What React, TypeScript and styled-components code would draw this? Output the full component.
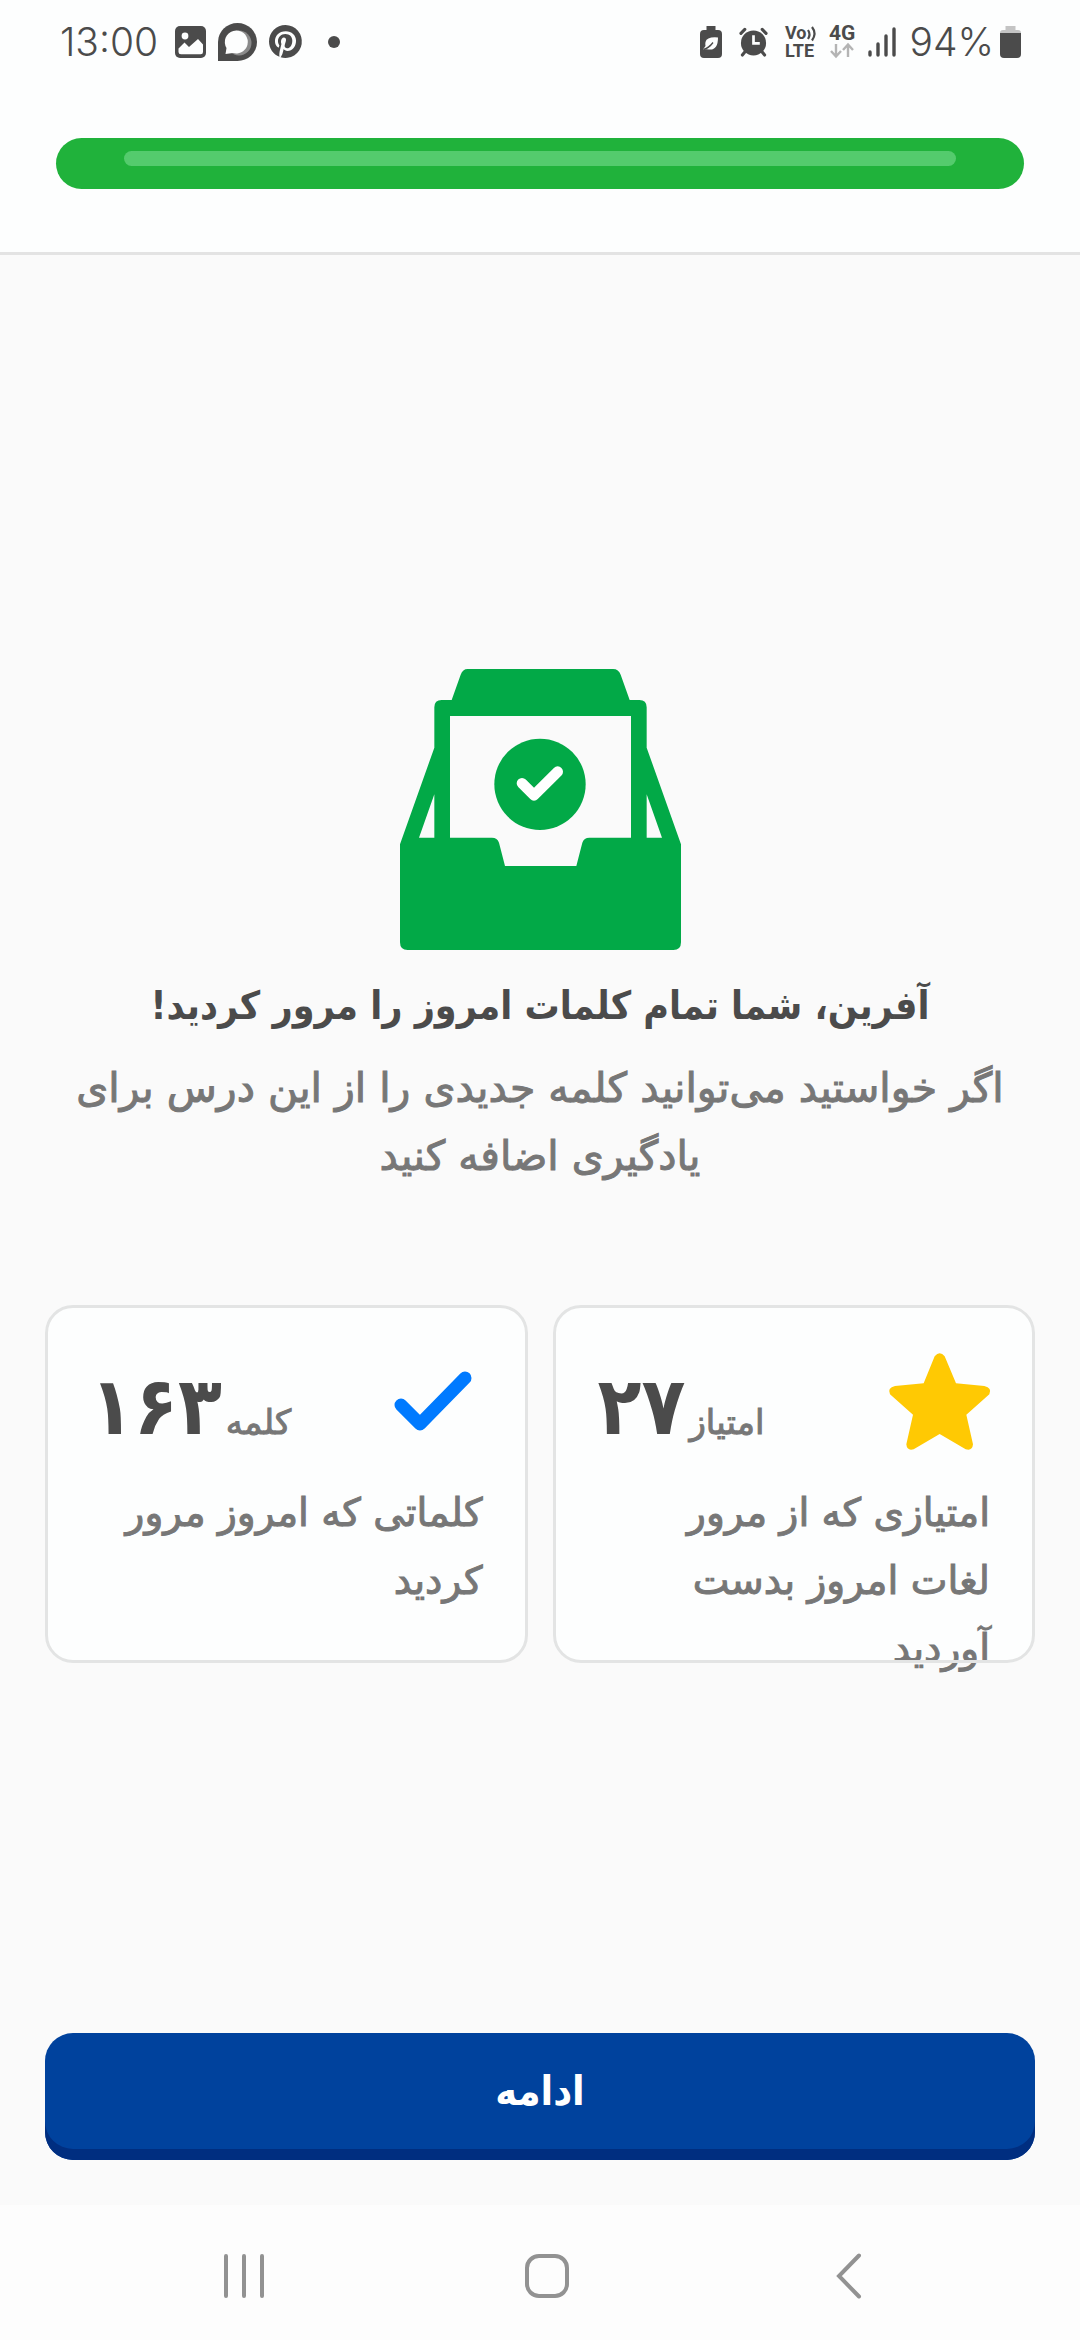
import React from "react";
import styled, { createGlobalStyle } from "styled-components";

const GlobalStyle = createGlobalStyle`
  *, *::before, *::after { box-sizing: border-box; }
  body {
    margin: 0;
    background: #fafafa;
    font-family: "DejaVu Sans", sans-serif;
  }
  h1, p { margin: 0; }
  svg { display: block; flex: none; overflow: visible; }
`;

const condensed = `"DejaVu Sans Condensed", "DejaVu Sans", sans-serif`;

const Screen = styled.div`
  display: flex;
  flex-direction: column;
  min-height: 100vh;
`;

const StatusBar = styled.div`
  display: flex;
  justify-content: space-between;
  align-items: center;
  height: 83px;
  padding: 0 59px 0 60px;
  background: #fdfefe;
  color: #4b4b4b;
  font: 300 39px/48px Inter, Roboto, sans-serif;
`;

const StatusGroup = styled.div<{ $gap: number }>`
  display: flex;
  align-items: center;
  gap: ${(p) => p.$gap}px;
`;

const Header = styled.header`
  padding: 55px 56px 63px;
  background: #fdfefe;
  border-bottom: 3px solid #e3e3e3;
`;

const Track = styled.div`
  height: 51px;
  padding: 13px 68px;
  border-radius: 26px;
  background: #20b23b;
`;

const Shine = styled.div`
  height: 15px;
  border-radius: 8px;
  background: #54cb6d;
`;

const Main = styled.main`
  flex: 1;
  display: flex;
  flex-direction: column;
  align-items: center;
  justify-content: center;
  padding: 44px 45px 0;
`;

const Title = styled.h1`
  margin-top: 16px;
  color: #4b4b4b;
  font: 700 39px/80px ${condensed};
  text-align: center;
`;

const Lead = styled.p`
  margin-top: 8px;
  padding: 0 24px;
  color: #777;
  font-size: 41px;
  line-height: 68px;
  text-align: center;
  -webkit-text-stroke: 1px currentColor;
`;

const Cards = styled.div`
  display: grid;
  grid-template-columns: 1fr 1fr;
  gap: 25px;
  align-self: stretch;
  margin-top: 115px;
`;

/* The outline is painted above the caption, which may run past the card. */
const Card = styled.section`
  position: relative;
  height: 358px;
  padding: 42px 45px;
  border-radius: 28px;
  background: #fdfefe;
  color: #777;

  &::after {
    content: "";
    position: absolute;
    inset: 0;
    border: 3px solid #e3e4e4;
    border-radius: inherit;
    pointer-events: none;
  }
`;

const CardTop = styled.div`
  display: flex;
  justify-content: space-between;
  align-items: center;
  height: 108px;
`;

const Score = styled.div`
  display: flex;
  align-items: baseline;
  gap: 4px;
  padding-top: 12px;
`;

const Unit = styled.span`
  font-size: 34px;
  -webkit-text-stroke: 1px currentColor;
`;

const Value = styled.strong`
  color: #4b4b4b;
  font: 700 80px/80px ${condensed};
`;

const Caption = styled.p`
  margin-top: 24px;
  font-size: 39px;
  line-height: 68px;
  -webkit-text-stroke: 1px currentColor;
`;

const Footer = styled.footer`
  padding: 0 45px 45px;
`;

const Continue = styled.button`
  display: block;
  width: 100%;
  height: 127px;
  padding: 0 0 12px;
  border: 0;
  border-radius: 28px;
  background: #00429d;
  box-shadow: inset 0 -11px 0 #002e80;
  color: #fff;
  font: 700 41px/68px ${condensed};
`;

const NavBar = styled.nav`
  display: flex;
  justify-content: space-between;
  align-items: center;
  height: 135px;
  padding: 6px 171px 0 184px;
  background: #fdfdfd;
`;

const NavButton = styled.button`
  display: grid;
  place-items: center;
  width: 120px;
  height: 96px;
  padding: 0;
  border: 0;
  background: none;
  color: #929292;
`;

const ink = "#4b4b4b";

const ImageIcon = () => (
  <svg width="31" height="32" viewBox="0 0 31 32">
    <rect width="31" height="32" rx="5" fill={ink} />
    <circle cx="10" cy="10" r="3.4" fill="#fdfefe" />
    <path d="M3.5 22.5 9.5 16.5 14 21 23 13 28 18.5V26q0 2.300-2.300 2.300H6q-2.500 0-2.500-2.300Z" fill="#fdfefe" />
  </svg>
);

const BubbleIcon = () => (
  <svg width="39" height="38" viewBox="0 0 39 38">
    <path d="M0 38V19A19.500 19 0 1 1 19.500 38Z" fill={ink} />
    <circle cx="21" cy="20" r="12.500" fill="#8a8a8a" />
    <path d="M7.500 31 8.500 25A11.500 11.500 0 1 1 15 30Z" fill="#fdfefe" />
  </svg>
);

const PinterestIcon = () => (
  <svg width="33" height="33" viewBox="0 0 24 24">
    <path
      fill={ink}
      d="M12 0C5.370 0 0 5.370 0 12c0 5.080 3.160 9.430 7.630 11.170-.1-.95-.2-2.400.04-3.440.22-.93 1.400-5.960 1.400-5.960s-.36-.72-.36-1.780c0-1.660.97-2.900 2.170-2.900 1.020 0 1.520.77 1.520 1.690 0 1.030-.66 2.570-1 3.990-.28 1.200.6 2.170 1.780 2.170 2.130 0 3.770-2.250 3.770-5.490 0-2.870-2.060-4.870-5.010-4.870-3.410 0-5.420 2.560-5.420 5.200 0 1.030.4 2.130.9 2.730.1.120.11.230.08.350-.09.380-.29 1.200-.33 1.360-.05.220-.18.270-.41.160-1.500-.7-2.430-2.890-2.430-4.650 0-3.780 2.750-7.260 7.930-7.260 4.160 0 7.400 2.970 7.400 6.930 0 4.140-2.610 7.470-6.230 7.470-1.220 0-2.360-.63-2.750-1.380l-.75 2.850c-.27 1.040-1 2.350-1.490 3.150A12 12 0 1 0 12 0Z"
    />
  </svg>
);

const DotIcon = () => (
  <svg width="12" height="12" viewBox="0 0 12 12">
    <circle cx="6" cy="6" r="6" fill={ink} />
  </svg>
);

const SaverIcon = () => (
  <svg width="22" height="32" viewBox="0 0 22 32">
    <path d="M6.500 0h9v4H18q4 0 4 4v20q0 4-4 4H4q-4 0-4-4V8q0-4 4-4h2.500Z" fill={ink} />
    <path d="M18 11.500q-11-1-12.500 4.500Q5 18.500 5.500 20L3 23.500q4-.5 6 0 9 1 9-12Z" fill="#fdfefe" />
    <path d="M3.500 23.500Q9 22 13 16.500" stroke={ink} strokeWidth="1.300" fill="none" />
  </svg>
);

const AlarmIcon = () => (
  <svg width="29" height="30" viewBox="0 0 30 30">
    <circle cx="15" cy="16" r="13" fill={ink} />
    <path d="m2 6 4-4M28 6l-4-4M3.500 28.500l4-5M26.500 28.500l-4-5" stroke={ink} strokeWidth="3.200" strokeLinecap="round" />
    <path d="M15 8v8.500h6.500" stroke="#fdfefe" strokeWidth="2.800" fill="none" />
  </svg>
);

const VolteIcon = () => (
  <svg width="31" height="33" viewBox="0 0 31 33" fill={ink} fontFamily="Roboto, sans-serif" fontWeight="700">
    <text x="0" y="14" fontSize="18">Vo</text>
    <text x="0" y="32" fontSize="18">LTE</text>
    <path d="M23 5q3 4.500 0 9M27 2q5 6.500 0 13.500" stroke={ink} strokeWidth="2.200" fill="none" />
  </svg>
);

const FourGIcon = () => (
  <svg width="26" height="33" viewBox="0 0 26 33">
    <text x="0" y="15" fontSize="21" fontFamily="Roboto, sans-serif" fontWeight="700" fill={ink}>4G</text>
    <path d="M7 19v12M2 26l5 5.500 5-5.500M19 32V20M14 25l5-5.500 5 5.500" stroke="#b4b4b4" strokeWidth="2.400" fill="none" />
  </svg>
);

const SignalIcon = () => (
  <svg width="28" height="30" viewBox="0 0 28 30">
    <path d="M2 25v3M10 17v11M18 9v19M26 2v26" stroke={ink} strokeWidth="3.400" strokeLinecap="round" />
  </svg>
);

const BatteryIcon = () => (
  <svg width="21" height="32" viewBox="0 0 21 32">
    <path d="M5.500 0h10v4H18q3 0 3 3H0q0-3 3-3h2.500Z" fill="#c4c4c4" />
    <path d="M0 7h21v21q0 4-4 4H4q-4 0-4-4Z" fill={ink} />
  </svg>
);

const TrayIcon = () => (
  <svg width="281" height="281" viewBox="0 0 843 843">
    <path
      fill="#02a947"
      fillRule="evenodd"
      d="M203 0H639Q656 0 662 17L689 93H718Q740 93 740 115V236L843 526V820Q843 843 820 843H23Q0 843 0 820V526L103 236V115Q103 93 125 93H155L182 17Q188 0 203 0ZM150 141V506H276Q292 506 297 521L315 591H529L547 521Q552 506 568 506H693V141ZM103 376 57 506H103ZM740 376V506H786Z"
    />
    <circle cx="420" cy="346" r="137" fill="#02a947" />
    <path d="m366 343 36 36 71-71" fill="none" stroke="#fff" strokeWidth="32" strokeLinecap="round" strokeLinejoin="round" />
  </svg>
);

const StarIcon = () => (
  <svg width="101" height="97" viewBox="0 0 303 291">
    <path
      fill="#ffc903"
      d="M137 10Q152-8 167 10L201 91 286 99Q310 104 301 124L232 185 252 274Q250 295 230 289L152 243 74 289Q54 295 52 274L72 185 3 124Q-6 104 18 99L104 91Z"
    />
  </svg>
);

const CheckIcon = () => (
  <svg width="101" height="60" viewBox="0 0 101 60">
    <path d="m19 34 19 19L83 7" fill="none" stroke="#007aff" strokeWidth="13" strokeLinecap="round" strokeLinejoin="round" />
  </svg>
);

type StatProps = { icon: React.ReactNode; unit: string; value: string; caption: string };

const Stat = ({ icon, unit, value, caption }: StatProps) => (
  <Card>
    <CardTop>
      {icon}
      <Score>
        <Unit>{unit}</Unit>
        <Value>{value}</Value>
      </Score>
    </CardTop>
    <Caption>{caption}</Caption>
  </Card>
);

export default function App() {
  return (
    <Screen>
      <GlobalStyle />
      <StatusBar>
        <StatusGroup $gap={26}>
          <StatusGroup $gap={17}>
            <span>13:00</span>
            <StatusGroup $gap={12}>
              <ImageIcon />
              <BubbleIcon />
              <PinterestIcon />
            </StatusGroup>
          </StatusGroup>
          <DotIcon />
        </StatusGroup>
        <StatusGroup $gap={13}>
          <StatusGroup $gap={17}>
            <SaverIcon />
            <AlarmIcon />
            <VolteIcon />
          </StatusGroup>
          <FourGIcon />
          <SignalIcon />
          <StatusGroup $gap={6}>
            <span>94%</span>
            <BatteryIcon />
          </StatusGroup>
        </StatusGroup>
      </StatusBar>
      <Header>
        <Track role="progressbar" aria-valuenow={100} aria-valuemin={0} aria-valuemax={100}>
          <Shine />
        </Track>
      </Header>
      <Main dir="rtl" lang="fa">
        <TrayIcon />
        <Title>آفرین، شما تمام کلمات امروز را مرور کردید!</Title>
        <Lead>اگر خواستید می‌توانید کلمه جدیدی را از این درس برای یادگیری اضافه کنید</Lead>
        <Cards>
          <Stat icon={<StarIcon />} unit="امتیاز" value="۲۷" caption="امتیازی که از مرور لغات امروز بدست آوردید" />
          <Stat icon={<CheckIcon />} unit="کلمه" value="۱۶۳" caption="کلماتی که امروز مرور کردید" />
        </Cards>
      </Main>
      <Footer dir="rtl" lang="fa">
        <Continue type="button">ادامه</Continue>
      </Footer>
      <NavBar>
        <NavButton type="button" aria-label="Recent apps">
          <svg width="42" height="44" viewBox="0 0 42 44">
            <path d="M3 2v40M21 2v40M39 2v40" stroke="currentColor" strokeWidth="4" strokeLinecap="round" />
          </svg>
        </NavButton>
        <NavButton type="button" aria-label="Home">
          <svg width="44" height="44" viewBox="0 0 44 44">
            <rect x="2" y="2" width="40" height="40" rx="12" fill="none" stroke="currentColor" strokeWidth="4" />
          </svg>
        </NavButton>
        <NavButton type="button" aria-label="Back">
          <svg width="26" height="46" viewBox="0 0 26 46">
            <path d="M23 2.500 3 23l20 20.500" fill="none" stroke="currentColor" strokeWidth="4" strokeLinecap="round" />
          </svg>
        </NavButton>
      </NavBar>
    </Screen>
  );
}
